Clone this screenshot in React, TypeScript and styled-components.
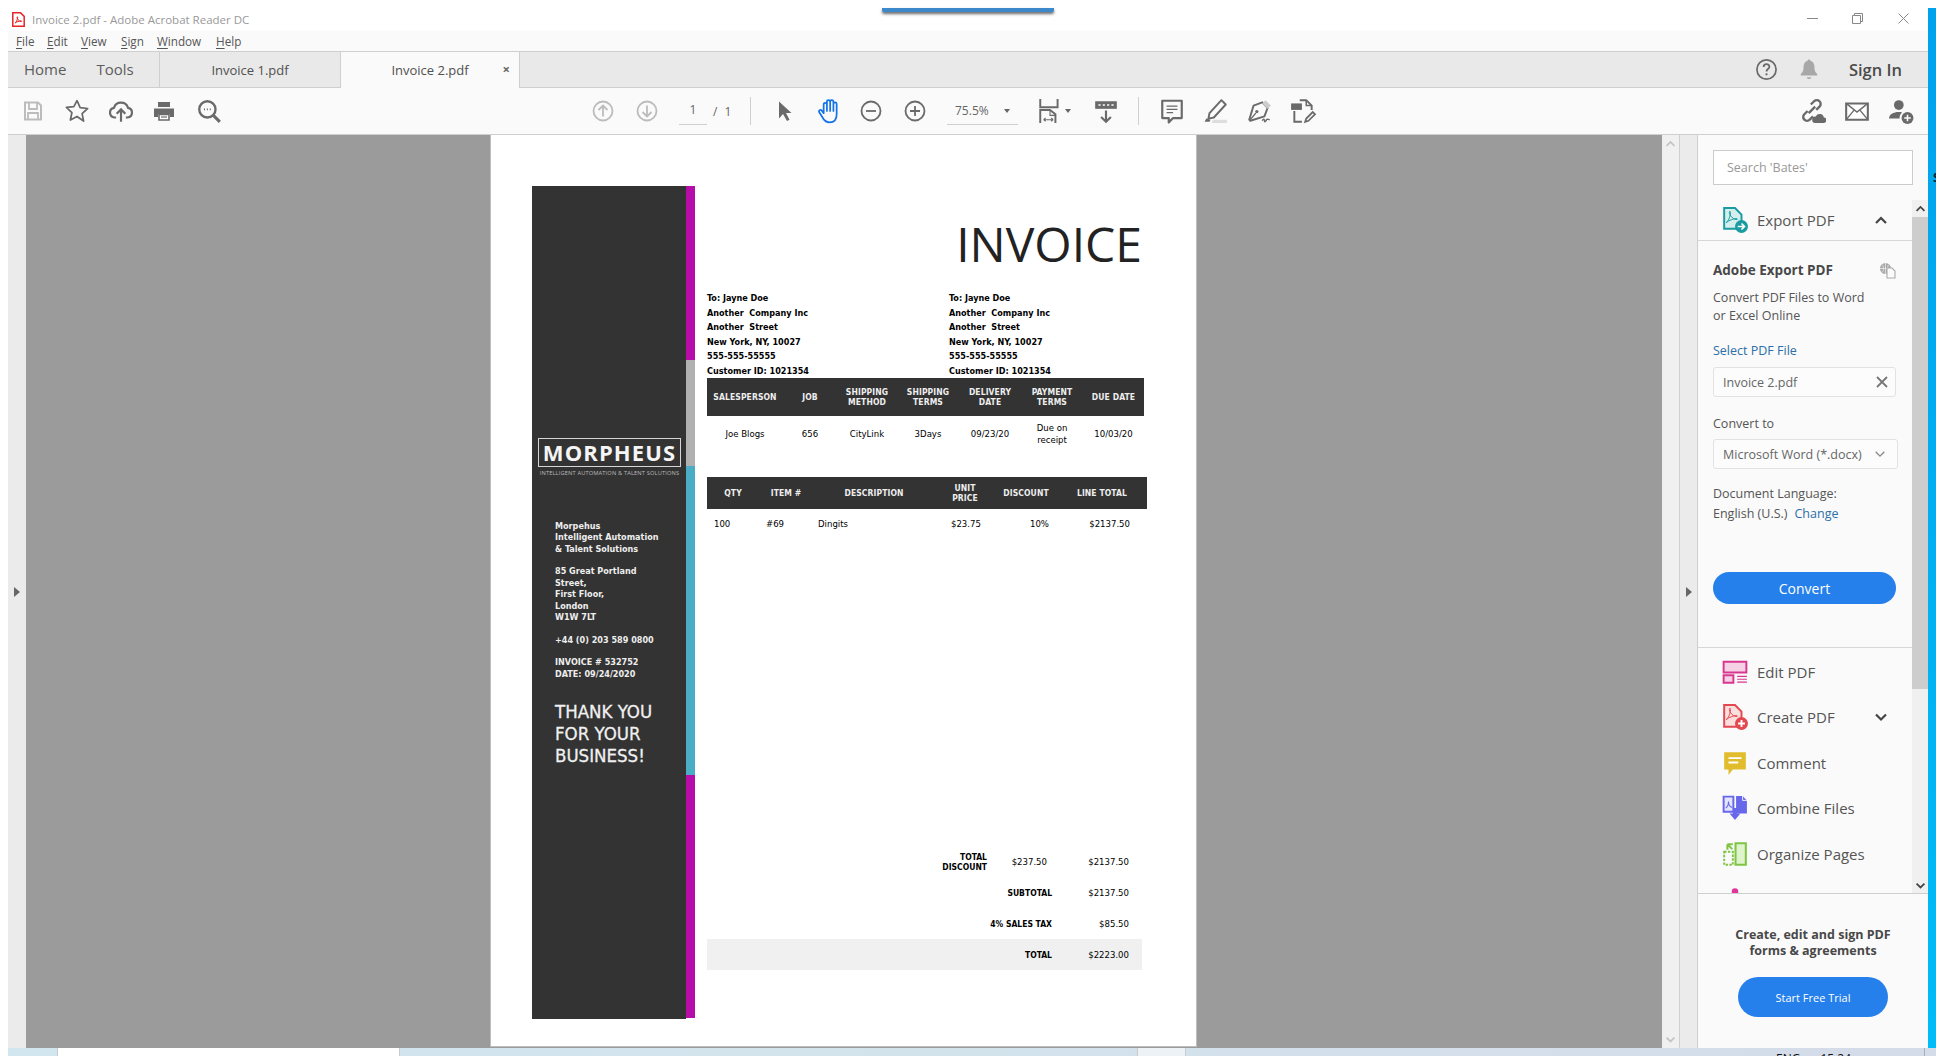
import React from 'react';
import styled, { createGlobalStyle } from 'styled-components';

const GlobalStyle = createGlobalStyle`
    html, body {
        margin: 0;
        padding: 0;
        background: #fff;
        overflow: hidden;
    }
    * {
        box-sizing: border-box;
    }
`;

const uiFont = `"Open Sans", "Noto Sans", sans-serif`;
const docFont = `"DejaVu Sans Condensed", "DejaVu Sans", sans-serif`;

const Shell = styled.div`
    width: 1936px;
    height: 1056px;
    padding-left: 8px;
    display: flex;
    flex-direction: column;
    position: relative;
    overflow: hidden;
    font-family: ${uiFont};
`;

const Upper = styled.div`
    height: 1048px;
    display: flex;
`;

const AppWindow = styled.div`
    flex: 1;
    min-width: 0;
    display: flex;
    flex-direction: column;
`;

const EdgeStrip = styled.div`
    width: 8px;
    margin-top: 8px;
    background: linear-gradient(#00a2ed, #00bcf8);
    position: relative;
    overflow: hidden;
`;

const EdgeGlyph = styled.span`
    position: absolute;
    left: 5px;
    top: 160px;
    font-size: 13px;
    font-weight: 700;
    color: #123;
`;

const OtherWindowEdge = styled.div`
    position: absolute;
    left: 882px;
    top: 8px;
    width: 172px;
    height: 4px;
    background: #3d87cb;
    border-radius: 0 0 2px 2px;
    box-shadow: 0 2px 3px rgba(0, 0, 0, 0.6);
`;

const TitleBar = styled.div`
    height: 31px;
    background: #fff;
    display: flex;
    align-items: center;
    padding: 8px 2px 0 4px;
`;

const TitleText = styled.span`
    margin-left: 7px;
    font-size: 11.5px;
    color: #999;
`;

const WindowControls = styled.div`
    margin-left: auto;
    display: flex;
`;

const WindowButton = styled.div`
    width: 45.5px;
    height: 20px;
    margin-top: -3px;
    display: flex;
    align-items: center;
    justify-content: center;
`;

const MenuBar = styled.div`
    height: 21px;
    background: #fafafa;
    border-bottom: 1px solid #cfcfcf;
    display: flex;
    align-items: center;
    font-size: 11.7px;
    color: #555;
    padding-left: 8px;
`;

const MenuItem = styled.span<{ $w: number }>`
    width: ${p => p.$w}px;
    u {
        text-underline-offset: 2px;
    }
`;

const TabBar = styled.div`
    height: 36px;
    background: #e9e9e9;
    border-bottom: 1px solid #cfcfcf;
    display: flex;
`;

const HomeTabs = styled.div`
    width: 152px;
    border-right: 1px solid #cfcfcf;
    display: flex;
    align-items: center;
    padding: 0 0 1px 16px;
    gap: 30px;
    font-size: 15px;
    color: #5c5c5c;
`;

const DocTab = styled.div<{ $active?: boolean }>`
    width: 180px;
    height: ${p => (p.$active ? 36 : 35)}px;
    position: relative;
    display: flex;
    align-items: center;
    justify-content: center;
    font-size: 13px;
    color: #505050;
    background: ${p => (p.$active ? '#fafafa' : 'transparent')};
    border-right: ${p => (p.$active ? '1px solid #cfcfcf' : '0')};
    border-left: ${p => (p.$active ? '1px solid #cfcfcf' : '0')};
`;

const TabClose = styled.span`
    position: absolute;
    right: 9px;
    top: 9px;
    font-size: 13px;
    font-weight: 700;
    line-height: 16px;
    color: #666;
`;

const TabTools = styled.div`
    margin-left: auto;
    padding: 0 26px 1px 0;
    display: flex;
    align-items: center;
`;

const SignIn = styled.span`
    margin-left: 19px;
    font-size: 16.5px;
    font-weight: 600;
    color: #4b4b4b;
`;

const Toolbar = styled.div`
    height: 47px;
    background: #fafafa;
    border-bottom: 1px solid #cfcfcf;
    display: flex;
    align-items: center;
`;

const LeftTools = styled.div`
    width: 573px;
    padding-left: 3px;
    display: flex;
    align-items: center;
`;

const CenterTools = styled.div`
    display: flex;
    align-items: center;
`;

const RightTools = styled.div`
    margin-left: auto;
    padding-right: 5px;
    display: flex;
    align-items: center;
`;

const Tool = styled.div<{ $w?: number; $ml?: number }>`
    flex: none;
    width: ${p => p.$w ?? 44}px;
    margin-left: ${p => p.$ml ?? 0}px;
    height: 30px;
    display: flex;
    align-items: center;
    justify-content: center;
`;

const PageInput = styled.div`
    flex: none;
    margin-left: 10px;
    width: 28px;
    height: 28px;
    line-height: 26px;
    border-bottom: 1px solid #cfcfcf;
    text-align: center;
    font-size: 12px;
    color: #666;
`;

const PageTotal = styled.span`
    flex: none;
    margin-left: 6px;
    width: 27px;
    font-size: 12px;
    color: #666;
    word-spacing: 4px;
`;

const ToolSep = styled.div`
    flex: none;
    width: 1px;
    height: 28px;
    margin: 0 11px 0 10px;
    background: #cfcfcf;
`;

const ZoomCombo = styled.div`
    flex: none;
    margin-left: 10px;
    width: 71px;
    height: 28px;
    padding: 0 8px;
    border-bottom: 1px solid #cfcfcf;
    display: flex;
    align-items: center;
    justify-content: space-between;
    font-size: 12px;
    color: #666;
`;

const Caret = styled.span`
    flex: none;
    width: 0;
    height: 0;
    border-left: 3.5px solid transparent;
    border-right: 3.5px solid transparent;
    border-top: 4px solid #666;
`;

const Main = styled.div`
    flex: 1;
    min-height: 0;
    display: flex;
`;

const Rail = styled.div<{ $w: number; $border?: boolean }>`
    width: ${p => p.$w}px;
    background: #ebebeb;
    display: flex;
    align-items: center;
    justify-content: center;
    border-right: ${p => (p.$border ? '1px solid #cfcfcf' : '0')};
    border-left: ${p => (p.$border ? '1px solid #cfcfcf' : '0')};
`;

const RailArrow = styled.span`
    width: 0;
    height: 0;
    border-top: 5px solid transparent;
    border-bottom: 5px solid transparent;
    border-left: 6px solid #666;
`;

const Canvas = styled.div`
    flex: 1;
    min-width: 0;
    background: #9b9b9b;
    display: flex;
    justify-content: center;
    overflow: hidden;
`;

const PageSheet = styled.div`
    width: 707px;
    height: 912px;
    margin-right: 1px;
    background: #fff;
    border: 1px solid #bdbdbd;
    border-top: 0;
    padding: 51px 0 0 41px;
    display: flex;
    color: #000;
    font-family: ${docFont};
`;

const Sidebar = styled.div`
    flex: none;
    width: 154px;
    height: 833px;
    background: #333;
    color: #fff;
    padding: 252px 0 0 6px;
`;

const LogoBox = styled.div`
    width: 143px;
    height: 29px;
    padding-bottom: 1px;
    border: 1px solid #d5d5d5;
    display: flex;
    align-items: center;
    justify-content: center;
    font-family: "Open Sans", sans-serif;
    font-size: 22px;
    font-weight: 700;
    letter-spacing: 1.1px;
    color: #f5f5f5;
`;

const LogoTag = styled.div`
    width: 143px;
    margin-top: 2px;
    text-align: center;
    font-family: "Open Sans", sans-serif;
    font-size: 5.7px;
    line-height: 8px;
    letter-spacing: 0.15px;
    color: #bbb;
    white-space: nowrap;
`;

const SideInfo = styled.div`
    margin: 44px 0 0 17px;
    font-size: 9px;
    font-weight: 700;
    line-height: 11.4px;
    color: #eee;
`;

const SideBlock = styled.div`
    margin-bottom: 11.2px;
`;

const ThankYou = styled.div`
    margin: 21px 0 0 17px;
    font-size: 18.5px;
    line-height: 22px;
    color: #f0f0f0;
    -webkit-text-stroke: 0.3px #f0f0f0;
`;

const AccentStrip = styled.div`
    flex: none;
    width: 9px;
    height: 832px;
    display: flex;
    flex-direction: column;
    background: #b60ca8;
`;

const AccentPart = styled.div<{ $h: number; $c: string }>`
    height: ${p => p.$h}px;
    background: ${p => p.$c};
`;

const InvoiceBody = styled.div`
    flex: none;
    margin-left: 12px;
    width: 442px;
`;

const InvoiceTitle = styled.div`
    height: 92px;
    padding-right: 7px;
    text-align: right;
    font-family: "Open Sans", sans-serif;
    font-size: 48px;
    line-height: 116px;
    color: #222;
`;

const Addresses = styled.div`
    display: flex;
    height: 100px;
    padding-top: 13px;
`;

const AddressCol = styled.div`
    flex: none;
    width: 242px;
    font-size: 9px;
    font-weight: 700;
    line-height: 14.6px;
    white-space: pre;
`;

const DarkRow = styled.div<{ $cols: string; $w: number; $h: number }>`
    width: ${p => p.$w}px;
    height: ${p => p.$h}px;
    background: #333;
    color: #eee;
    display: grid;
    grid-template-columns: ${p => p.$cols};
    align-items: center;
    text-align: center;
    font-size: 8.5px;
    font-weight: 700;
    line-height: 10.5px;
    letter-spacing: 0.1px;
`;

const InfoRow = styled.div<{ $cols: string; $w: number; $h: number }>`
    width: ${p => p.$w}px;
    height: ${p => p.$h}px;
    display: grid;
    grid-template-columns: ${p => p.$cols};
    align-items: center;
    font-size: 9.5px;
    line-height: 12px;
`;

const Cell = styled.div<{ $align?: string; $pl?: number; $pr?: number }>`
    text-align: ${p => p.$align ?? 'center'};
    padding-left: ${p => p.$pl ?? 0}px;
    padding-right: ${p => p.$pr ?? 0}px;
`;

const ItemsHead = styled.div`
    margin-top: 25px;
`;

const Totals = styled.div`
    margin-top: 307px;
    width: 435px;
`;

const TotalRow = styled.div<{ $shade?: boolean }>`
    height: 31px;
    display: grid;
    grid-template-columns: 345px 77px;
    align-items: center;
    background: ${p => (p.$shade ? '#f0f0f0' : 'transparent')};
    font-size: 9.5px;
`;

const TotalLabel = styled.div`
    text-align: right;
    font-size: 8.5px;
    font-weight: 700;
`;

const TotalValue = styled.div`
    text-align: right;
`;

const DiscountLabel = styled.div`
    display: grid;
    grid-template-columns: 280px 60px;
    align-items: center;
`;

const DiscountName = styled.div`
    text-align: right;
    font-size: 8.5px;
    font-weight: 700;
    line-height: 10px;
`;

const CanvasScroll = styled.div`
    width: 17px;
    background: #f0f0f0;
    display: flex;
    flex-direction: column;
    align-items: center;
    justify-content: space-between;
    padding: 3px 0;
`;

const Panel = styled.div`
    width: 230px;
    background: #fafafa;
    display: flex;
    flex-direction: column;
    color: #555;
`;

const PanelTop = styled.div`
    height: 759px;
    border-bottom: 1px solid #cfcfcf;
    display: flex;
    flex-direction: column;
`;

const SearchWrap = styled.div`
    height: 65px;
    padding: 15px 15px 0;
`;

const SearchBox = styled.div`
    width: 200px;
    height: 35px;
    background: #fff;
    border: 1px solid #ccc;
    padding-left: 13px;
    line-height: 33px;
    font-size: 12.5px;
    color: #999;
`;

const PanelScrollArea = styled.div`
    flex: 1;
    min-height: 0;
    display: flex;
`;

const PanelContent = styled.div`
    flex: 1;
    min-width: 0;
    overflow: hidden;
`;

const PanelScrollbar = styled.div`
    width: 16px;
    background: #f0f0f0;
    display: flex;
    flex-direction: column;
    align-items: center;
`;

const ScrollUp = styled.div`
    height: 17px;
    display: flex;
    align-items: center;
`;

const ScrollThumb = styled.div`
    width: 16px;
    height: 472px;
    background: #cdcdcd;
`;

const ScrollDown = styled.div`
    margin-top: auto;
    height: 16px;
    display: flex;
    align-items: center;
`;

const ExportHeader = styled.div`
    height: 41px;
    padding: 0 0 0 24px;
    border-bottom: 1px solid #d8d8d8;
    display: flex;
    align-items: center;
`;

const RowLabel = styled.span`
    margin-left: 9px;
    font-size: 15px;
    color: #555;
`;

const RowChevron = styled.span`
    margin-left: auto;
    margin-right: 24px;
    display: flex;
`;

const ExportBody = styled.div`
    padding: 19px 15px 0;
    font-size: 12.5px;
`;

const ExportTitle = styled.div`
    width: 183px;
    height: 20px;
    display: flex;
    align-items: center;
    justify-content: space-between;
    font-weight: 700;
    font-size: 13.5px;
    color: #484848;
`;

const Desc = styled.div`
    margin-top: 9px;
    line-height: 18px;
`;

const FieldLabel = styled.div<{ $mt: number; $blue?: boolean }>`
    margin-top: ${p => p.$mt}px;
    line-height: 18px;
    color: ${p => (p.$blue ? '#2b6ea8' : '#555')};
`;

const Field = styled.div<{ $mt: number; $w: number; $pr: number }>`
    margin-top: ${p => p.$mt}px;
    width: ${p => p.$w}px;
    height: 30px;
    border: 1px solid #e2e2e2;
    border-radius: 3px;
    background: #fcfcfc;
    padding: 0 ${p => p.$pr}px 0 9px;
    display: flex;
    align-items: center;
    justify-content: space-between;
    color: #666;
`;

const ChangeLink = styled.span`
    margin-left: 7px;
    color: #2b6ea8;
`;

const PrimaryButton = styled.div<{ $w: number; $h: number; $fs: number }>`
    width: ${p => p.$w}px;
    height: ${p => p.$h}px;
    border-radius: ${p => p.$h / 2}px;
    background: #2680eb;
    color: #fff;
    display: flex;
    align-items: center;
    justify-content: center;
    font-size: ${p => p.$fs}px;
`;

const ConvertSlot = styled.div`
    margin-top: 49px;
`;

const PanelDivider = styled.div`
    margin-top: 43px;
    height: 1px;
    background: #d8d8d8;
`;

const ToolList = styled.div`
    padding-top: 1px;
`;

const ToolRow = styled.div`
    height: 45.5px;
    padding-left: 23px;
    display: flex;
    align-items: center;
`;

const ToolIconSlot = styled.div`
    width: 28px;
    display: flex;
    justify-content: center;
`;

const ToolName = styled.span`
    margin-left: 8px;
    font-size: 15px;
    color: #555;
`;

const PanelPromo = styled.div`
    flex: 1;
    display: flex;
    flex-direction: column;
    align-items: center;
    padding-top: 33px;
`;

const PromoText = styled.div`
    width: 226px;
    text-align: center;
    font-size: 12.5px;
    font-weight: 700;
    line-height: 15.5px;
    color: #484848;
`;

const TrialSlot = styled.div`
    margin-top: 19px;
`;

const Taskbar = styled.div`
    height: 8px;
    background: linear-gradient(90deg, #d2e6ef, #d3e3ec 50%, #d4dbe9);
    display: flex;
    overflow: hidden;
`;

const TaskSlot = styled.div<{ $ml: number; $w: number; $c: string }>`
    margin-left: ${p => p.$ml}px;
    width: ${p => p.$w}px;
    background: ${p => p.$c};
    border-left: 1px solid #c8ccd0;
    border-right: 1px solid #c8ccd0;
`;

const TrayText = styled.span<{ $ml: number }>`
    margin-left: ${p => p.$ml}px;
    padding-top: 3px;
    font-size: 12px;
    line-height: 16px;
    color: #111;
    white-space: nowrap;
`;

const TrayEdge = styled.div`
    margin-left: auto;
    margin-right: 11px;
    width: 1px;
    background: #a9adb5;
`;

const Icon = ({ size = 24, children }: { size?: number; children: React.ReactNode }) => (
    <svg width={size} height={size} viewBox="0 0 24 24" fill="none">{children}</svg>
);

const ACRO = 'M7 17c2-1 4-5 4.5-10 .2-2-1.5-2-1.2 0 .5 3 3 6 7 7 1.8.4 1.8-1.2 0-1-3 .3-7 1.5-10 4z';

const grey = '#6a6a6a';

const PdfLogo = () => (
    <svg width="13" height="15" viewBox="0 0 13 15" fill="none">
        <path d="M.8.8h7.700l3.700 3.600v9.800H.8z" fill="#fff" stroke="#e5242a" strokeWidth="1.5" />
        <path d="M3 11c1.200-.6 2.400-3 2.700-5.500.1-1-.8-1-.7 0 .3 1.800 1.800 3.400 4 4 1 .2 1-.7 0-.6-1.800.2-4.200.9-6 2.100z" stroke="#e5242a" strokeWidth="1" />
    </svg>
);

const SaveIcon = () => (
    <Icon>
        <path d="M4 3.5h13l3 3v14H4z" stroke="#bcbcbc" strokeWidth="2" />
        <path d="M8 4v6h8V4M7 20v-6h10v6" stroke="#bcbcbc" strokeWidth="1.8" />
    </Icon>
);

const StarIcon = () => (
    <Icon size={26}>
        <path d="M12 2.5l2.900 6.400 6.900.8-5.100 4.700 1.400 6.900L12 17l-6.100 3.300 1.400-6.900-5.100-4.700 6.900-.8z" stroke={grey} strokeWidth="1.6" strokeLinejoin="round" />
    </Icon>
);

const CloudIcon = () => (
    <Icon size={26}>
        <path d="M7.5 18H6a4.500 4.500 0 0 1-.5-8.900 6.800 6.800 0 0 1 13 0A4.500 4.500 0 0 1 18 18h-1.500" stroke={grey} strokeWidth="2" />
        <path d="M12 22V11M8 14.5l4-4 4 4" stroke={grey} strokeWidth="2" />
    </Icon>
);

const PrintIcon = () => (
    <Icon>
        <path d="M6 3h12v5H6zM2 9.5h20V18h-4v-3H6v3H2z" fill={grey} />
        <path d="M7 15.5h10V21H7z" stroke={grey} strokeWidth="1.6" fill="#fff" />
        <path d="M9 18h6" stroke={grey} strokeWidth="1.2" />
    </Icon>
);

const FindIcon = () => (
    <Icon size={26}>
        <circle cx="10.5" cy="10.5" r="7.5" stroke={grey} strokeWidth="2.2" />
        <path d="M16 16l6 6" stroke={grey} strokeWidth="2.8" />
        <path d="M7.3 10.5h1M10 10.5h1M12.700 10.5h1" stroke={grey} strokeWidth="1.4" />
    </Icon>
);

const UpIcon = ({ down }: { down?: boolean }) => (
    <Icon>
        <circle cx="12" cy="12" r="9.5" stroke="#bcbcbc" strokeWidth="1.8" />
        <path d={down ? 'M12 6.5v11M7.5 13l4.500 4.500 4.500-4.500' : 'M12 17.5v-11M7.5 11L12 6.500 16.500 11'} stroke="#bcbcbc" strokeWidth="1.8" />
    </Icon>
);

const ArrowIcon = () => (
    <Icon>
        <path d="M7 2.5v17l4-4.500 4 7 2.500-1.200-3.500-6.800h5.500z" fill={grey} />
    </Icon>
);

const HandIcon = () => (
    <Icon size={26}>
        <path d="M6 14V6a1.500 1.500 0 0 1 3 0v6M9 12V3.500a1.500 1.500 0 0 1 3 0V12M12 12V3.500a1.500 1.500 0 0 1 3 0V12M15 12V5.500a1.500 1.500 0 0 1 3 0V15c0 4-1.500 7.500-6.500 7.500-3.500 0-5-1.500-6.500-4.500L1.800 13c-.8-1.500 1.200-2.700 2.500-1.300L6 14" stroke="#1473e6" strokeWidth="1.6" strokeLinecap="round" strokeLinejoin="round" transform="translate(2 0)" />
    </Icon>
);

const ZoomOutIcon = ({ plus }: { plus?: boolean }) => (
    <Icon>
        <circle cx="12" cy="12" r="9.5" stroke={grey} strokeWidth="1.8" />
        <path d={plus ? 'M7 12h10M12 7v10' : 'M7 12h10'} stroke={grey} strokeWidth="1.8" />
    </Icon>
);

const FitIcon = () => (
    <Icon size={26}>
        <path d="M3 1v7.5h16V1" stroke={grey} strokeWidth="1.8" />
        <path d="M3 23V11h9l5 4v8" stroke={grey} strokeWidth="1.8" />
        <path d="M12 11v5h5M6 20h9M6 20l2-1.500M6 20l2 1.500M15 20l-2-1.500M15 20l-2 1.500" stroke={grey} strokeWidth="1" />
    </Icon>
);

const ReadIcon = () => (
    <Icon size={26}>
        <path d="M2 3h20v7H2z" fill={grey} />
        <path d="M5 6.5h2M9 6.5h2M13 6.5h2M17 6.5h2" stroke="#fff" strokeWidth="1.4" />
        <path d="M12 11.5V22M7.5 17.5L12 22l4.500-4.500" stroke={grey} strokeWidth="2" />
    </Icon>
);

const CommentIcon = () => (
    <Icon size={26}>
        <path d="M3 2.5h18v16h-8l-4 4v-4H3z" stroke={grey} strokeWidth="2" strokeLinejoin="round" />
        <path d="M7 7.5h10M7 10.5h10M7 13.5h6" stroke={grey} strokeWidth="1.3" />
    </Icon>
);

const HighlightIcon = () => (
    <Icon size={26}>
        <path d="M17 2l4 4-11 12-5 1 1-5z" stroke={grey} strokeWidth="1.8" strokeLinejoin="round" />
        <path d="M3 19l-1.500 3h4.500l1-2z" fill={grey} />
        <path d="M9 20h13v3H8z" fill="#ddd" />
    </Icon>
);

const SignPenIcon = () => (
    <Icon size={26}>
        <path d="M15 5l-8 3-4 13 1 1 13-4 3-8z" stroke={grey} strokeWidth="1.8" strokeLinejoin="round" transform="translate(0 -1)" />
        <path d="M15 5l3-3 5 5-3 3z" fill="#ccc" />
        <circle cx="10" cy="12.5" r="1.5" fill={grey} />
        <path d="M4 20l5-6M15 21c1-2 2-2 2 0s1.500 0 2-1 1.500 0 3 0" stroke={grey} strokeWidth="1.3" />
    </Icon>
);

const StampIcon = () => (
    <Icon size={26}>
        <path d="M9 2h6l5 5v4M11 22H4V12" stroke={grey} strokeWidth="1.8" />
        <path d="M1 5h10v6H1z" fill={grey} />
        <path d="M15 2v5h5" stroke={grey} strokeWidth="1.4" />
        <path d="M14 22l1-3 6-6 2 2-6 6z" stroke={grey} strokeWidth="1.6" />
    </Icon>
);

const LinkCloudIcon = () => (
    <Icon size={26}>
        <path d="M8 14l6-6M10 6l3-3a3.500 3.500 0 0 1 5 5l-3 3M12 17l-3 3a3.500 3.500 0 0 1-5-5l3-3" stroke={grey} strokeWidth="2.2" />
        <path d="M14 23a3 3 0 0 1 .5-6 4 4 0 0 1 7.500 1 2.500 2.500 0 0 1 0 5z" fill={grey} />
    </Icon>
);

const MailIcon = () => (
    <Icon size={26}>
        <path d="M2 5h20v15H2z" fill="#fff" stroke={grey} strokeWidth="1.9" />
        <path d="M2 5l10 8 10-8M2 20l7.500-9M22 20l-7.500-9" stroke={grey} strokeWidth="1.3" />
    </Icon>
);

const PersonAddIcon = () => (
    <Icon size={26}>
        <circle cx="10" cy="6.5" r="4.5" fill={grey} />
        <path d="M1 19c0-4 4-6 9-6 1.500 0 2 0 3 .5-1.500 1-2.500 3-2.300 5.500z" fill={grey} />
        <circle cx="18" cy="18.5" r="5.5" fill={grey} />
        <path d="M15 18.5h6M18 15.5v6" stroke="#fff" strokeWidth="1.4" />
    </Icon>
);

const HelpIcon = () => (
    <Icon size={23}>
        <circle cx="12" cy="12" r="10" stroke={grey} strokeWidth="1.8" />
        <path d="M9 9.5c0-4 6-4 6-.5 0 2.500-3 2.500-3 5" stroke={grey} strokeWidth="1.9" />
        <circle cx="12" cy="17" r="1.2" fill={grey} />
    </Icon>
);

const BellIcon = () => (
    <Icon size={22}>
        <path d="M12 1.5c1 0 1.500.7 1.500 1.500 3.500 1 4.500 4 4.500 8 0 3 1 5 3 6.500v1.500H3v-1.500c2-1.500 3-3.500 3-6.500 0-4 1-7 4.500-8 0-.8.500-1.500 1.500-1.500zM9.500 21h5a2.500 2 0 0 1-5 0z" fill="#a8a8a8" />
    </Icon>
);

const ExportIcon = () => (
    <Icon size={26}>
        <path d="M2 1h10l6 6v13H2z" fill="#d5eeee" stroke="#1a9ba1" strokeWidth="1.8" />
        <path d={ACRO} stroke="#1a9ba1" strokeWidth="1" transform="translate(-2.5 -1) scale(.9)" />
        <circle cx="18" cy="18" r="6" fill="#1a9ba1" />
        <path d="M14.5 18h6M18 15.2l2.800 2.800-2.800 2.800" stroke="#fff" strokeWidth="1.5" />
    </Icon>
);

const EditPdfIcon = () => (
    <Icon size={26}>
        <path d="M1.5 2.5h21v10h-21zM1.5 15h9v7h-9z" fill="#f6d0e5" stroke="#d83790" strokeWidth="1.8" />
        <path d="M14 16h9M14 18.7h9M14 21.4h9" stroke="#d83790" strokeWidth="1.1" />
    </Icon>
);

const CreatePdfIcon = () => (
    <Icon size={26}>
        <path d="M2 1h10l6 6v14H2z" fill="#fbdede" stroke="#e34850" strokeWidth="1.8" />
        <path d={ACRO} stroke="#e34850" strokeWidth="1" transform="translate(-2.5 -1) scale(.9)" />
        <circle cx="18" cy="18" r="6" fill="#e34850" />
        <path d="M14.8 18h6.400M18 14.8v6.400" stroke="#fff" strokeWidth="1.7" />
    </Icon>
);

const CommentPdfIcon = () => (
    <Icon size={26}>
        <path d="M2 2h20v16H10l-4 5v-5H2z" fill="#e1bc2d" />
        <path d="M6 7.5h12M6 11.5h9" stroke="#fff" strokeWidth="1.7" />
    </Icon>
);

const CombineIcon = () => (
    <Icon size={26}>
        <path d="M1.5 1.5h9v14h-9z" fill="#e4e4fc" stroke="#6767ec" strokeWidth="1.8" />
        <path d="M13 1h6l4 4v12H13z" fill="#6767ec" />
        <path d="M19 1v4h4" stroke="#fff" strokeWidth=".8" />
        <path d="M3.5 12c1.500-1 2.500-3 2.500-6 0 3 1.500 5 3.500 5.500" stroke="#6767ec" strokeWidth="1" />
        <path d="M10 17h4v-5l-4 0zM7 17h10l-5 6z" fill="#6767ec" />
    </Icon>
);

const OrganizeIcon = () => (
    <Icon size={26}>
        <path d="M12.5 2h9.500v20h-9.500z" fill="#dff3cd" stroke="#7ec544" strokeWidth="1.9" />
        <path d="M2 10h8v12H2z" stroke="#7ec544" strokeWidth="1.8" strokeDasharray="2.2 1.3" />
        <path d="M10 3L5 3M5 3v5M9.5 7.5L5 3" stroke="#7ec544" strokeWidth="1.9" />
    </Icon>
);

const PinkIcon = () => (
    <Icon size={26}>
        <circle cx="12" cy="5" r="3" fill="#e0359b" />
    </Icon>
);

const ChevronIcon = ({ up, color = '#444', size = 14, w = 2.2 }: { up?: boolean; color?: string; size?: number; w?: number }) => (
    <svg width={size} height={size} viewBox="0 0 14 14" fill="none">
        <path d={up ? 'M2 10l5-5 5 5' : 'M2 4.5l5 5 5-5'} stroke={color} strokeWidth={w} />
    </svg>
);

const GlobeDocIcon = () => (
    <svg width="17" height="17" viewBox="0 0 17 17" fill="none">
        <circle cx="6.5" cy="6.5" r="5.5" fill="#a9a9a9" />
        <path d="M1 6.5h11M6.5 1v11M3 2.500c2 2 2 6 0 8M10 2.500c-2 2-2 6 0 8" stroke="#fafafa" strokeWidth=".6" />
        <path d="M8 6h5l3 3v7H8z" fill="#fafafa" stroke="#a9a9a9" strokeWidth="1.1" />
    </svg>
);

const address = [
    'To: Jayne Doe',
    'Another  Company Inc',
    'Another  Street',
    'New York, NY, 10027',
    '555-555-55555',
    'Customer ID: 1021354',
];

const jobCols = '76px 54px 60px 62px 62px 62px 61px';
const itemCols = '52px 54px 122px 60px 62px 90px';

const panelTools = [
    { name: 'Edit PDF', icon: <EditPdfIcon /> },
    { name: 'Create PDF', icon: <CreatePdfIcon />, more: true },
    { name: 'Comment', icon: <CommentPdfIcon /> },
    { name: 'Combine Files', icon: <CombineIcon /> },
    { name: 'Organize Pages', icon: <OrganizeIcon /> },
];

export default function App() {
    return (
        <Shell>
            <GlobalStyle />
            <OtherWindowEdge />
            <Upper>
                <AppWindow>
                    <TitleBar>
                        <PdfLogo />
                        <TitleText>Invoice 2.pdf - Adobe Acrobat Reader DC</TitleText>
                        <WindowControls>
                            <WindowButton>
                                <svg width="11" height="11" viewBox="0 0 11 11"><path d="M0 5.5h11" stroke="#888" /></svg>
                            </WindowButton>
                            <WindowButton>
                                <svg width="11" height="11" viewBox="0 0 11 11" fill="none"><path d="M.5 2.500h8v8h-8zM2.500 2.500v-2h8v8h-2" stroke="#888" /></svg>
                            </WindowButton>
                            <WindowButton>
                                <svg width="11" height="11" viewBox="0 0 11 11"><path d="M.5.500l10 10M10.500.500l-10 10" stroke="#888" /></svg>
                            </WindowButton>
                        </WindowControls>
                    </TitleBar>
                    <MenuBar>
                        <MenuItem $w={31}><u>F</u>ile</MenuItem>
                        <MenuItem $w={34}><u>E</u>dit</MenuItem>
                        <MenuItem $w={40}><u>V</u>iew</MenuItem>
                        <MenuItem $w={36}><u>S</u>ign</MenuItem>
                        <MenuItem $w={59}><u>W</u>indow</MenuItem>
                        <MenuItem $w={30}><u>H</u>elp</MenuItem>
                    </MenuBar>
                    <TabBar>
                        <HomeTabs>
                            <span>Home</span>
                            <span>Tools</span>
                        </HomeTabs>
                        <DocTab>Invoice 1.pdf</DocTab>
                        <DocTab $active>
                            Invoice 2.pdf
                            <TabClose>×</TabClose>
                        </DocTab>
                        <TabTools>
                            <Tool $w={42}><HelpIcon /></Tool>
                            <Tool $w={42}><BellIcon /></Tool>
                            <SignIn>Sign In</SignIn>
                        </TabTools>
                    </TabBar>
                    <Toolbar>
                        <LeftTools>
                            <Tool><SaveIcon /></Tool>
                            <Tool><StarIcon /></Tool>
                            <Tool><CloudIcon /></Tool>
                            <Tool $w={42}><PrintIcon /></Tool>
                            <Tool $w={47}><FindIcon /></Tool>
                        </LeftTools>
                        <CenterTools>
                            <Tool><UpIcon /></Tool>
                            <Tool><UpIcon down /></Tool>
                            <PageInput>1</PageInput>
                            <PageTotal>/ 1</PageTotal>
                            <ToolSep />
                            <Tool><ArrowIcon /></Tool>
                            <Tool $w={43}><HandIcon /></Tool>
                            <Tool><ZoomOutIcon /></Tool>
                            <Tool><ZoomOutIcon plus /></Tool>
                            <ZoomCombo>75.5%<Caret /></ZoomCombo>
                            <Tool $w={32} $ml={16}><FitIcon /></Tool>
                            <Tool $w={4}><Caret /></Tool>
                            <Tool $ml={14}><ReadIcon /></Tool>
                            <ToolSep />
                            <Tool><CommentIcon /></Tool>
                            <Tool $w={43}><HighlightIcon /></Tool>
                            <Tool><SignPenIcon /></Tool>
                            <Tool><StampIcon /></Tool>
                        </CenterTools>
                        <RightTools>
                            <Tool><LinkCloudIcon /></Tool>
                            <Tool><MailIcon /></Tool>
                            <Tool><PersonAddIcon /></Tool>
                        </RightTools>
                    </Toolbar>
                    <Main>
                        <Rail $w={18}><RailArrow /></Rail>
                        <Canvas>
                            <PageSheet>
                                <Sidebar>
                                    <LogoBox>MORPHEUS</LogoBox>
                                    <LogoTag>INTELLIGENT AUTOMATION &amp; TALENT SOLUTIONS</LogoTag>
                                    <SideInfo>
                                        <SideBlock>Morpehus<br />Intelligent Automation<br />&amp; Talent Solutions</SideBlock>
                                        <SideBlock>85 Great Portland<br />Street,<br />First Floor,<br />London<br />W1W 7LT</SideBlock>
                                        <SideBlock>+44 (0) 203 589 0800</SideBlock>
                                        <SideBlock>INVOICE # 532752<br />DATE: 09/24/2020</SideBlock>
                                    </SideInfo>
                                    <ThankYou>THANK YOU<br />FOR YOUR<br />BUSINESS!</ThankYou>
                                </Sidebar>
                                <AccentStrip>
                                    <AccentPart $h={174} $c="#b60ca8" />
                                    <AccentPart $h={106} $c="#b0b0b0" />
                                    <AccentPart $h={309} $c="#4bacc6" />
                                </AccentStrip>
                                <InvoiceBody>
                                    <InvoiceTitle>INVOICE</InvoiceTitle>
                                    <Addresses>
                                        <AddressCol>{address.join('\n')}</AddressCol>
                                        <AddressCol>{address.join('\n')}</AddressCol>
                                    </Addresses>
                                    <DarkRow $cols={jobCols} $w={437} $h={38}>
                                        <div>SALESPERSON</div>
                                        <div>JOB</div>
                                        <div>SHIPPING<br />METHOD</div>
                                        <div>SHIPPING<br />TERMS</div>
                                        <div>DELIVERY<br />DATE</div>
                                        <div>PAYMENT<br />TERMS</div>
                                        <div>DUE DATE</div>
                                    </DarkRow>
                                    <InfoRow $cols={jobCols} $w={437} $h={36}>
                                        <Cell>Joe Blogs</Cell>
                                        <Cell>656</Cell>
                                        <Cell>CityLink</Cell>
                                        <Cell>3Days</Cell>
                                        <Cell>09/23/20</Cell>
                                        <Cell>Due on<br />receipt</Cell>
                                        <Cell>10/03/20</Cell>
                                    </InfoRow>
                                    <ItemsHead />
                                    <DarkRow $cols={itemCols} $w={440} $h={32}>
                                        <div>QTY</div>
                                        <div>ITEM #</div>
                                        <div>DESCRIPTION</div>
                                        <div>UNIT<br />PRICE</div>
                                        <div>DISCOUNT</div>
                                        <div>LINE TOTAL</div>
                                    </DarkRow>
                                    <InfoRow $cols={itemCols} $w={440} $h={30}>
                                        <Cell $align="left" $pl={7}>100</Cell>
                                        <Cell $align="left" $pl={7}>#69</Cell>
                                        <Cell $align="left" $pl={5}>Dingits</Cell>
                                        <Cell $align="left" $pl={16}>$23.75</Cell>
                                        <Cell $align="left" $pl={35}>10%</Cell>
                                        <Cell $align="right" $pr={17}>$2137.50</Cell>
                                    </InfoRow>
                                    <Totals>
                                        <TotalRow>
                                            <DiscountLabel>
                                                <DiscountName>TOTAL<br />DISCOUNT</DiscountName>
                                                <TotalValue>$237.50</TotalValue>
                                            </DiscountLabel>
                                            <TotalValue>$2137.50</TotalValue>
                                        </TotalRow>
                                        <TotalRow>
                                            <TotalLabel>SUBTOTAL</TotalLabel>
                                            <TotalValue>$2137.50</TotalValue>
                                        </TotalRow>
                                        <TotalRow>
                                            <TotalLabel>4% SALES TAX</TotalLabel>
                                            <TotalValue>$85.50</TotalValue>
                                        </TotalRow>
                                        <TotalRow $shade>
                                            <TotalLabel>TOTAL</TotalLabel>
                                            <TotalValue>$2223.00</TotalValue>
                                        </TotalRow>
                                    </Totals>
                                </InvoiceBody>
                            </PageSheet>
                        </Canvas>
                        <CanvasScroll>
                            <ChevronIcon up color="#c4c4c4" size={11} />
                            <ChevronIcon color="#c4c4c4" size={11} />
                        </CanvasScroll>
                        <Rail $w={19} $border><RailArrow /></Rail>
                        <Panel>
                            <PanelTop>
                                <SearchWrap>
                                    <SearchBox>Search 'Bates'</SearchBox>
                                </SearchWrap>
                                <PanelScrollArea>
                                    <PanelContent>
                                        <ExportHeader>
                                            <ExportIcon />
                                            <RowLabel>Export PDF</RowLabel>
                                            <RowChevron><ChevronIcon up /></RowChevron>
                                        </ExportHeader>
                                        <ExportBody>
                                            <ExportTitle>
                                                Adobe Export PDF
                                                <GlobeDocIcon />
                                            </ExportTitle>
                                            <Desc>Convert PDF Files to Word<br />or Excel Online</Desc>
                                            <FieldLabel $mt={17} $blue>Select PDF File</FieldLabel>
                                            <Field $mt={7} $w={183} $pr={7}>
                                                Invoice 2.pdf
                                                <svg width="12" height="12" viewBox="0 0 12 12"><path d="M1 1l10 10M11 1L1 11" stroke="#777" strokeWidth="1.8" /></svg>
                                            </Field>
                                            <FieldLabel $mt={18}>Convert to</FieldLabel>
                                            <Field $mt={6} $w={185} $pr={11}>
                                                Microsoft Word (*.docx)
                                                <ChevronIcon color="#888" size={12} w={1.6} />
                                            </Field>
                                            <FieldLabel $mt={16}>Document Language:</FieldLabel>
                                            <FieldLabel $mt={2}>English (U.S.)<ChangeLink>Change</ChangeLink></FieldLabel>
                                            <ConvertSlot>
                                                <PrimaryButton $w={183} $h={32} $fs={14}>Convert</PrimaryButton>
                                            </ConvertSlot>
                                        </ExportBody>
                                        <PanelDivider />
                                        <ToolList>
                                            {panelTools.map(t => (
                                                <ToolRow key={t.name}>
                                                    <ToolIconSlot>{t.icon}</ToolIconSlot>
                                                    <ToolName>{t.name}</ToolName>
                                                    {t.more && <RowChevron><ChevronIcon /></RowChevron>}
                                                </ToolRow>
                                            ))}
                                            <ToolRow>
                                                <ToolIconSlot><PinkIcon /></ToolIconSlot>
                                            </ToolRow>
                                        </ToolList>
                                    </PanelContent>
                                    <PanelScrollbar>
                                        <ScrollUp><ChevronIcon up size={11} /></ScrollUp>
                                        <ScrollThumb />
                                        <ScrollDown><ChevronIcon size={11} /></ScrollDown>
                                    </PanelScrollbar>
                                </PanelScrollArea>
                            </PanelTop>
                            <PanelPromo>
                                <PromoText>Create, edit and sign PDF<br />forms &amp; agreements</PromoText>
                                <TrialSlot>
                                    <PrimaryButton $w={150} $h={40} $fs={11}>Start Free Trial</PrimaryButton>
                                </TrialSlot>
                            </PanelPromo>
                        </Panel>
                    </Main>
                </AppWindow>
                <EdgeStrip>
                    <EdgeGlyph>S</EdgeGlyph>
                </EdgeStrip>
            </Upper>
            <Taskbar>
                <TaskSlot $ml={49} $w={343} $c="#fff" />
                <TaskSlot $ml={737} $w={49} $c="#edf2f6" />
                <TrayText $ml={590}>ENG</TrayText>
                <TrayText $ml={20}>15:24</TrayText>
                <TrayEdge />
            </Taskbar>
        </Shell>
    );
}
